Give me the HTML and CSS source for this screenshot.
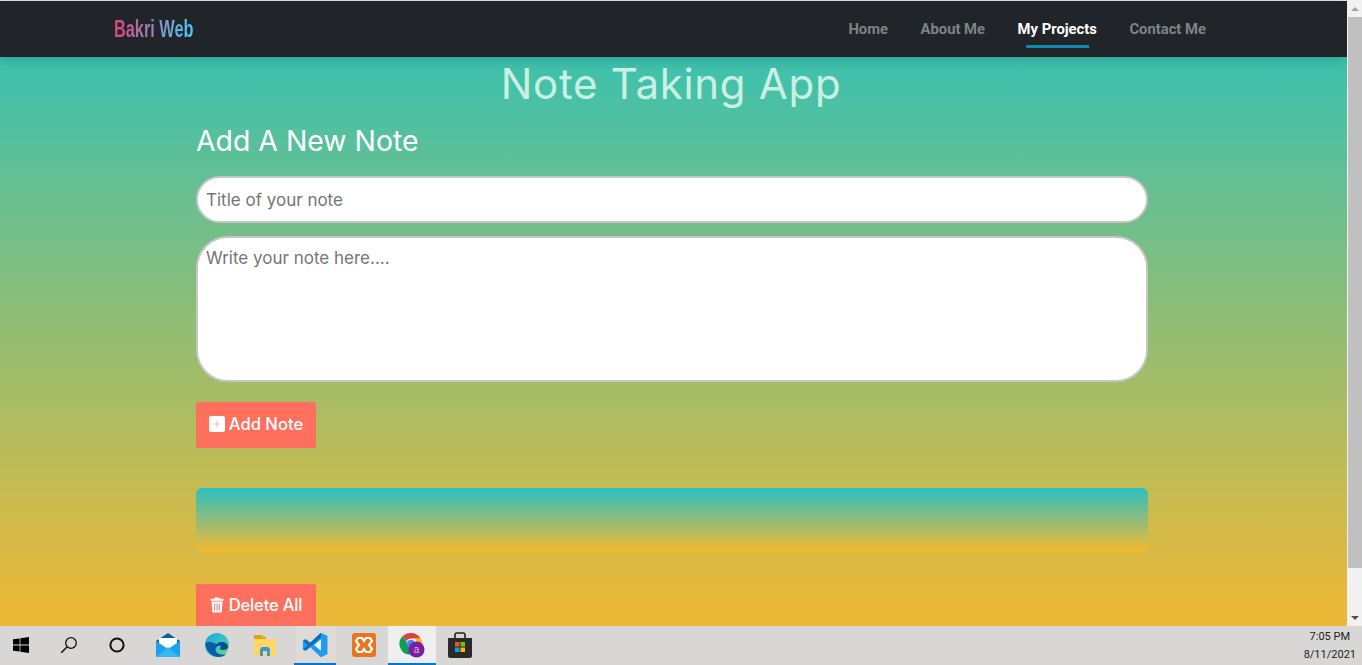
FILE: index.html
```html
<!DOCTYPE html>
<html lang="en">
<head>
    <meta charset="UTF-8">
    <title>Note Taking App</title>
    <link rel="stylesheet" href="styles.css">
</head>
<body>

<div class="window">
    <div class="page">
        <!-- Navbar -->
        <nav class="navbar">
            <a class="brand">Bakri Web</a>
            <ul class="nav-links">
                <li><a>Home</a></li>
                <li><a>About Me</a></li>
                <li><a class="active">My Projects</a></li>
                <li><a>Contact Me</a></li>
            </ul>
        </nav>

        <!-- Notes -->
        <main class="content">
            <h1>Note Taking App</h1>
            <h2>Add A New Note</h2>
            <input class="field title-field" type="text" placeholder="Title of your note">
            <textarea class="field note-field" placeholder="Write your note here...."></textarea>
            <button class="btn add-btn">
                <svg class="btn-icon" viewBox="0 0 16 16"><rect x="0" y="0" width="16" height="16" rx="2" fill="#fff"/><path d="M8 4.500v7M4.500 8h7" stroke="#ffb3c2" stroke-width="1"/></svg>
                Add Note
            </button>
            <div class="notes"></div>
            <button class="btn delete-btn">
                <svg class="btn-icon trash" viewBox="0 0 14 16"><path d="M5 0.500h4l0.600 1.300H13.400v1.900H0.600V1.800H4.400z" fill="#fff"/><path d="M1.500 4.600h11l-0.800 10.200c0 0.400-0.400 0.800-0.900 0.800H3.200c-0.500 0-0.900-0.400-0.900-0.800z" fill="#fff"/><path d="M4.700 6.500v7M7 6.500v7M9.300 6.500v7" stroke="#ff6f5e" stroke-width="1"/></svg>
                Delete All
            </button>
        </main>
    </div>

    <div class="scrollbar">
        <div class="arrow arrow-up"></div>
        <div class="thumb"></div>
        <div class="arrow arrow-down"></div>
    </div>
</div>

<!-- Windows taskbar -->
<footer class="taskbar">
    <div class="task task-start">
        <svg viewBox="0 0 16 16" width="16" height="16"><path d="M0 2.300l6.600-.9v6.200H0zM7.400 1.300L16 0v7.600H7.400zM0 8.400h6.600v6.200L0 13.700zM7.400 8.400H16V16l-8.600-1.300z" fill="#000"/></svg>
    </div>
    <div class="task">
        <svg viewBox="0 0 18 18" width="18" height="18"><circle cx="11" cy="7" r="5.300" fill="none" stroke="#111" stroke-width="1.300"/><path d="M7.200 10.800L1.200 16.800" stroke="#111" stroke-width="1.500"/></svg>
    </div>
    <div class="task">
        <svg viewBox="0 0 16 16" width="16" height="16"><circle cx="8" cy="8" r="6.600" fill="none" stroke="#111" stroke-width="2"/></svg>
    </div>
    <div class="task task-mail">
        <svg viewBox="0 0 24 24" width="24" height="24">
            <path d="M0 8L12 0l12 8v3H0z" fill="#0a5fa8"/>
            <path d="M3 5h18v10H3z" fill="#fff"/>
            <path d="M0 8l12 8 12-8v16H0z" fill="#1ba1e8"/>
            <path d="M0 24l12-10 12 10z" fill="#35b8f1"/>
        </svg>
    </div>
    <div class="task task-edge">
        <svg viewBox="0 0 24 24" width="24" height="24">
            <defs>
                <linearGradient id="edgeGreen" x1="0" y1="0" x2="1" y2="1"><stop offset="0" stop-color="#1aa3d8"/><stop offset="0.500" stop-color="#35c1c9"/><stop offset="1" stop-color="#6fe05a"/></linearGradient>
            </defs>
            <circle cx="12" cy="12" r="12" fill="url(#edgeGreen)"/>
            <path d="M0.500 10c0 8 6 14 13.500 14 3 0 5.500-1 7.500-3-5 1.500-11 0-11-5 0-2 1-3 2.500-4C9 9 3 8 0.500 10z" fill="#0c5ba8"/>
            <path d="M10.500 15c0-4 3-6 6-6 4 0 6.500 2 6.500 5 0 1-2 3-5 3-2 0-3-1-3-1.500 0-1 1-1.500 1-2.500-2-1.500-4 0-5.500 2.500z" fill="#0c4a90"/>
        </svg>
    </div>
    <div class="task">
        <svg viewBox="0 0 24 24" width="24" height="24">
            <path d="M1 2h8l2 2h2v4H1z" fill="#d9a514"/>
            <path d="M1 6h22v17H1z" fill="#ffd766"/>
            <path d="M7 23v-7l2-2h6l2 2v7h-3v-5h-4v5z" fill="#3a96dd"/>
        </svg>
    </div>
    <div class="task task-open">
        <svg viewBox="0 0 24 24" width="26" height="26">
            <path d="M17.500 0.800L23.500 3.600V20.400L17.500 23.200L7.600 14L3.300 17.400L0.800 16V8L3.300 6.600L7.600 10z" fill="#1f9cf0"/>
            <path d="M17.500 6.800L11.200 12L17.500 17.200z" fill="#f0f4f7"/>
            <path d="M17.500 0.800L7.600 10L3.300 6.600L0.800 8L5.500 12L0.800 16L3.300 17.400L17.500 5z" fill="#0b6fb8"/>
        </svg>
    </div>
    <div class="task task-xampp">
        <svg viewBox="0 0 24 24" width="24" height="24">
            <rect width="24" height="24" rx="3" fill="#e8761e"/>
            <path d="M6 5h4l2 3 2-3h4l2 3-3 4 3 4-2 3h-4l-2-3-2 3H6l-2-3 3-4-3-4z" fill="none" stroke="#fff" stroke-width="2.200"/>
        </svg>
    </div>
    <div class="task task-active">
        <svg viewBox="0 0 26 26" width="26" height="26">
            <g transform="translate(1 0)">
                <path d="M11 1a11 11 0 0 1 9.600 5.500H11a5 5 0 0 0-4.700 3.200L2.800 4A11 11 0 0 1 11 1z" fill="#db4437"/>
                <path d="M2.800 4l4.800 8.300a4.800 4.800 0 0 0 5 2.400L9.300 22.800A11 11 0 0 1 2.800 4z" fill="#0f9d58"/>
                <path d="M20.600 6.500a11 11 0 0 1-11.300 16.300l5-8a5 5 0 0 0 .5-8.300z" fill="#f4b400"/>
                <circle cx="11" cy="12" r="4.300" fill="#4285f4"/>
            </g>
            <circle cx="17.500" cy="17.500" r="8" fill="#7b1fa2"/>
            <text class="avatar-letter" x="17.500" y="21" text-anchor="middle">a</text>
        </svg>
    </div>
    <div class="task">
        <svg viewBox="0 0 24 26" width="24" height="26">
            <path d="M7 6V3a2 2 0 0 1 2-2h6a2 2 0 0 1 2 2v3" fill="none" stroke="#222" stroke-width="1.600"/>
            <path d="M0 6h24v18a2 2 0 0 1-2 2H2a2 2 0 0 1-2-2z" fill="#2a2a2a"/>
            <path d="M7 10h4.500v4.500H7z" fill="#f25022"/>
            <path d="M12.500 10H17v4.500h-4.500z" fill="#7fba00"/>
            <path d="M7 15.500h4.500V20H7z" fill="#00a4ef"/>
            <path d="M12.500 15.500H17V20h-4.500z" fill="#ffb900"/>
        </svg>
    </div>
    <div class="clock">
        <span>7:05 PM</span>
        <span>8/11/2021</span>
    </div>
</footer>

</body>
</html>
```

FILE: styles.css
```css
* {
    box-sizing: border-box;
}
html, body {
    height: 100%;
}
body {
    margin: 0;
    display: flex;
    flex-direction: column;
    overflow: hidden;
    font-family: Inter, Arial, sans-serif;
}

.window {
    display: flex;
    height: 626px;
}
.page {
    flex: 1;
    overflow: hidden;
    background: linear-gradient(#3ac1b0 8%, #ebb938 97%);
    box-shadow: inset 0 1px 0 #e8e8e8;
}

/* Navbar */
.navbar {
    display: flex;
    align-items: center;
    justify-content: space-between;
    height: 56px;
    margin-top: 1px;
    padding: 0 141px 0 114px;
    background-color: #212529;
    box-shadow: 0 2px 12px rgba(0, 0, 0, 0.2);
}
.brand {
    font-family: "Liberation Sans", Arial, sans-serif;
    font-size: 24px;
    font-weight: 700;
    transform: scaleX(0.68);
    transform-origin: left center;
    background: linear-gradient(90deg, #e0407c, #45cdfa);
    -webkit-background-clip: text;
    background-clip: text;
    color: transparent;
}
.nav-links {
    display: flex;
    gap: 32.5px;
    margin: 0;
    padding: 0;
    list-style: none;
    font-family: Roboto, Arial, sans-serif;
    font-size: 14.8px;
    font-weight: 700;
    color: #7f8286;
}
.nav-links a {
    display: block;
    padding: 6px 0;
    position: relative;
}
.nav-links .active {
    color: #fff;
}
.nav-links .active::after {
    content: "";
    position: absolute;
    left: 8px;
    right: 8px;
    bottom: -4px;
    height: 3px;
    background-color: #0e8aa8;
}

/* Notes */
.content {
    display: flex;
    flex-direction: column;
    align-items: flex-start;
    width: 952px;
    margin-left: 196px;
}
h1 {
    align-self: center;
    margin: 0 2px 0 0;
    font-size: 42px;
    line-height: 54px;
    font-weight: 400;
    letter-spacing: 0.7px;
    color: #c9f0e3;
}
h2 {
    margin: 9px 0 14px;
    font-size: 28.4px;
    line-height: 42px;
    font-weight: 400;
    color: #fff;
}
.field {
    display: block;
    width: 100%;
    padding: 0 8px;
    border: 2px solid #c6c6c6;
    background: #fff;
    font-family: inherit;
    font-size: 17px;
    outline: none;
    resize: none;
}
.field::placeholder {
    color: #757575;
}
.title-field {
    height: 47px;
    border-radius: 24px;
}
.note-field {
    height: 146px;
    margin-top: 13px;
    padding-top: 10px;
    border-radius: 32px;
}
.btn {
    display: flex;
    align-items: center;
    justify-content: center;
    gap: 4px;
    width: 120px;
    height: 46px;
    padding: 0 0 2px;
    border: none;
    border-radius: 2px;
    background-color: #ff6f5e;
    color: #fff;
    font-family: inherit;
    font-size: 16.6px;
    font-weight: 500;
}
.add-btn {
    margin-top: 20px;
}
.delete-btn {
    height: 44px;
    gap: 5px;
    letter-spacing: -0.2px;
}
.btn-icon {
    width: 16px;
    height: 16px;
}
.btn-icon.trash {
    width: 14px;
}
.notes {
    width: 100%;
    height: 64px;
    margin: 40px 0 32px;
    border-radius: 6px;
    background: linear-gradient(#2ac0c4, #f6b92f);
}

/* Scrollbar */
.scrollbar {
    display: flex;
    flex-direction: column;
    width: 15px;
    background-color: #f1f1f1;
}
.thumb {
    height: 551px;
    margin: 0 0 0 1px;
    background-color: #c0c0c0;
}
.arrow {
    flex: none;
    height: 17px;
    display: flex;
    align-items: center;
    justify-content: center;
}
.arrow-down {
    margin-top: auto;
}
.arrow::before {
    content: "";
    border-left: 4px solid transparent;
    border-right: 4px solid transparent;
}
.arrow-up::before {
    border-bottom: 4px solid #a3a3a3;
}
.arrow-down::before {
    border-top: 4px solid #505050;
}

/* Taskbar */
.taskbar {
    display: flex;
    height: 39px;
    background-color: #d8d7d5;
}
.task {
    display: flex;
    align-items: center;
    justify-content: center;
    flex: none;
    width: 48px;
    border-bottom: 2px solid transparent;
}
.task-start {
    width: 42px;
    margin-right: 3px;
}
.task-mail {
    margin-left: 3px;
}
.task-edge {
    margin-left: 1px;
}
.task-open {
    margin-left: 2px;
    background: linear-gradient(90deg, transparent 5px, #dedad8 5px, #dedad8 45px, transparent 45px);
    border-image: linear-gradient(90deg, transparent 4px, #0078d7 4px, #0078d7 44px, transparent 44px) 1;
}
.task-xampp {
    margin-left: 1px;
}
.task-active {
    background-color: #eeeeee;
    border-bottom-color: #0078d7;
}
.avatar-letter {
    font-family: "Liberation Sans", Arial, sans-serif;
    font-size: 10px;
    fill: #d9b8e6;
}
.clock {
    display: flex;
    flex-direction: column;
    align-items: center;
    justify-content: center;
    gap: 2px;
    margin-left: auto;
    padding-right: 6px;
    font-family: Roboto, Arial, sans-serif;
    font-size: 11px;
    line-height: 16px;
    color: #222;
}
```
